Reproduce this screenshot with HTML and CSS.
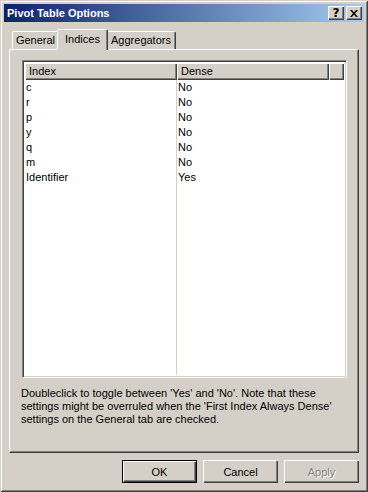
FILE: index.html
```html
<!DOCTYPE html>
<html>
<head>
<meta charset="utf-8">
<link rel="stylesheet" href="styles.css">
</head>
<body>
<div class="window">
  <div class="titlebar">
    <span class="title">Pivot Table Options</span>
    <div class="tbtns">
      <span class="tbtn q">?</span>
      <span class="tbtn x"><svg width="8" height="7" viewBox="0 0 8 7"><path d="M0 0h2l2 2.5L6 0h2L5 3.5 8 7H6L4 4.5 2 7H0l3-3.5z" fill="#000"/></svg></span>
    </div>
  </div>
  <div class="client">
    <div class="tabs">
      <div class="tab">General</div>
      <div class="tab sel">Indices</div>
      <div class="tab">Aggregators</div>
    </div>
    <div class="panel">
      <div class="list">
        <div class="head">
          <div class="hc c1">Index</div>
          <div class="hc c2">Dense</div>
          <div class="hc c3"></div>
        </div>
        <div class="rows">
          <div class="row"><span class="d1">c</span><span class="d2">No</span></div>
          <div class="row"><span class="d1">r</span><span class="d2">No</span></div>
          <div class="row"><span class="d1">p</span><span class="d2">No</span></div>
          <div class="row"><span class="d1">y</span><span class="d2">No</span></div>
          <div class="row"><span class="d1">q</span><span class="d2">No</span></div>
          <div class="row"><span class="d1">m</span><span class="d2">No</span></div>
          <div class="row"><span class="d1">Identifier</span><span class="d2">Yes</span></div>
          <div class="fill"><span class="d1"></span><span class="d2"></span></div>
        </div>
      </div>
      <p class="help">Doubleclick to toggle between 'Yes' and 'No'. Note that these settings might be overruled when the 'First Index Always Dense' settings on the General tab are checked.</p>
    </div>
    <div class="buttons">
      <button class="btn def">OK</button>
      <button class="btn">Cancel</button>
      <button class="btn dis">Apply</button>
    </div>
  </div>
</div>
</body>
</html>
```
FILE: styles.css
```css
* { box-sizing: border-box; }
html, body { margin: 0; padding: 0; }
body {
  width: 368px; height: 492px;
  background: #d4d0c8;
  font-family: "Liberation Sans", Arial, sans-serif;
  font-size: 11px;
  color: #000;
}
.window {
  width: 368px; height: 492px;
  background: #d4d0c8;
  padding: 3px 3px 3px 3px;
  box-shadow: inset 1px 1px 0 #d4d0c8, inset -1px -1px 0 #404040, inset 2px 2px 0 #ffffff, inset -2px -2px 0 #808080;
  display: flex; flex-direction: column;
}
.titlebar {
  height: 18px;
  margin: 1px 1px 0 1px;
  background: linear-gradient(to right, #0a246a, #a6caf0);
  display: flex; align-items: center; justify-content: space-between;
  padding: 0 2px 0 3px;
}
.title {
  color: #fff; font-weight: bold;
  font-family: "Liberation Sans", Arial, sans-serif; font-size: 11px;
}
.tbtns { display: flex; gap: 2px; }
.tbtn {
  width: 16px; height: 14px;
  background: #d4d0c8;
  box-shadow: inset 1px 1px 0 #ffffff, inset -1px -1px 0 #404040, inset -2px -2px 0 #808080;
  display: flex; align-items: center; justify-content: center;
  font-weight: bold; font-size: 12px; line-height: 14px;
  font-family: "DejaVu Sans", sans-serif;
}
.tbtn.q { padding-bottom: 1px; }
.client { padding: 6px 6px 0 6px; display: flex; flex-direction: column; }
.tabs { display: flex; padding-left: 3px; height: 21px; align-items: flex-end; position: relative; z-index: 1; }
.tab {
  height: 18px;
  padding: 0;
  text-align: center;
  line-height: 17px;
  background: #d4d0c8;
  border-left: 1px solid #fff;
  border-top: 1px solid #fff;
  border-right: 1px solid #404040;
  box-shadow: inset -1px 0 0 #808080;
  border-radius: 2px 2px 0 0;
}
.tab:first-child { width: 47px; }
.tab:nth-child(3) { width: 70px; }
.tab.sel {
  height: 21px; width: 51px;
  margin: 0 -2px 0 -2px;
  line-height: 18px;
  position: relative; z-index: 2;
  margin-bottom: -1px;
}
.panel {
  width: 350px; height: 404px;
  background: #d4d0c8;
  border-left: 1px solid #fff;
  border-top: 1px solid #fff;
  border-right: 1px solid #404040;
  border-bottom: 1px solid #404040;
  box-shadow: inset -1px -1px 0 #808080;
  padding: 10px 0 0 12px;
}
.list {
  width: 325px; height: 318px;
  background: #fff;
  border-left: 1px solid #808080;
  border-top: 1px solid #808080;
  border-right: 1px solid #fff;
  border-bottom: 1px solid #fff;
  box-shadow: inset 1px 1px 0 #404040, inset -1px -1px 0 #d4d0c8;
  padding: 2px 2px 2px 2px;
  display: flex; flex-direction: column;
}
.head { display: flex; height: 17px; flex: none; }
.hc {
  height: 17px;
  background: #d4d0c8;
  box-shadow: inset 1px 1px 0 #fff, inset -1px -1px 0 #404040, inset -2px -2px 0 #808080;
  line-height: 16px; padding-left: 4px;
}
.c1 { width: 152px; }
.c2 { width: 152px; }
.c3 { flex: 1; }
.rows { flex: 1; display: flex; flex-direction: column; }
.row, .fill { display: flex; }
.row { height: 15px; line-height: 15px; }
.fill { flex: 1; }
.d1 { width: 152px; padding-left: 1px; border-right: 1px solid #d4d0c8; }
.d2 { padding-left: 1px; }
.help {
  margin: 9px 0 0 -1px;
  width: 325px;
  line-height: 13px;
}
.buttons {
  display: flex; justify-content: flex-end; gap: 6px;
  margin-top: 7px;
}
.btn {
  width: 75px; height: 23px;
  font: inherit; font-size: 11px; color: #000;
  background: #d4d0c8;
  border: none; padding: 0;
  box-shadow: inset 1px 1px 0 #fff, inset -1px -1px 0 #404040, inset -2px -2px 0 #808080;
}
.btn.def {
  border: 1px solid #000;
  box-shadow: inset 1px 1px 0 #fff, inset -1px -1px 0 #404040, inset -2px -2px 0 #808080;
}
.btn.dis { color: #808080; text-shadow: 1px 1px 0 #fff; }
```
